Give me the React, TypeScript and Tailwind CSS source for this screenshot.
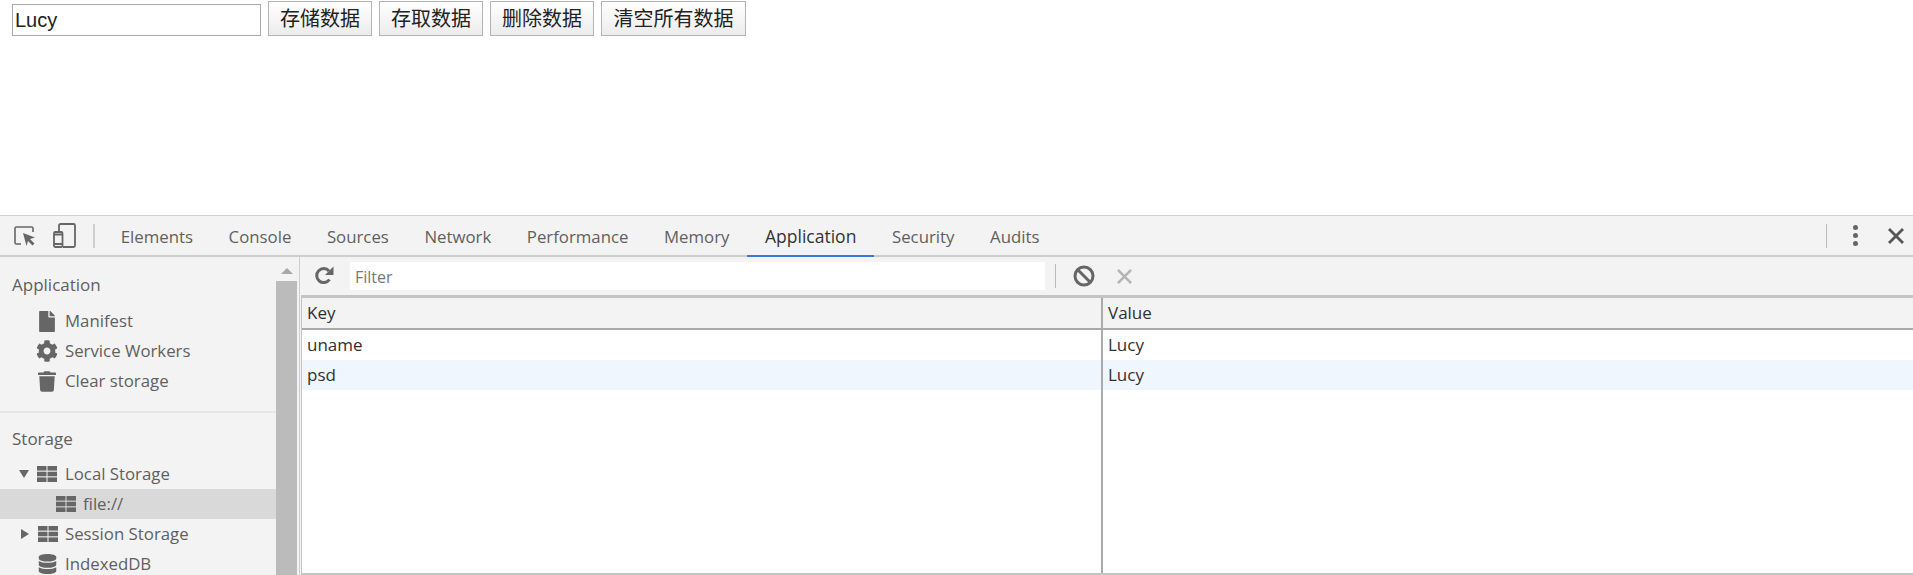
import { FaCog, FaDatabase, FaFile, FaTrash } from 'react-icons/fa'

const buttons = [
  { label: '存储数据', width: 'w-[104px]' },
  { label: '存取数据', width: 'w-[104px]' },
  { label: '删除数据', width: 'w-[104px]' },
  { label: '清空所有数据', width: 'w-[145px]' },
]

const tabs = ['Elements', 'Console', 'Sources', 'Network', 'Performance', 'Memory', 'Application', 'Security', 'Audits']

function TableIcon({ className }: { className: string }) {
  return (
    <svg viewBox="0 0 20 16" className={className} fill="#666">
      <rect x="0" y="0" width="9.500" height="4.600" />
      <rect x="10.500" y="0" width="9.500" height="4.600" />
      <rect x="0" y="5.700" width="9.500" height="4.600" />
      <rect x="10.500" y="5.700" width="9.500" height="4.600" />
      <rect x="0" y="11.400" width="9.500" height="4.600" />
      <rect x="10.500" y="11.400" width="9.500" height="4.600" />
    </svg>
  )
}

function InspectIcon() {
  return (
    <svg viewBox="0 0 22 22" className="h-[22px] w-[22px]" fill="none">
      <path d="M7 19H2.500A1.500 1.500 0 0 1 1 17.500V3.500A1.500 1.500 0 0 1 2.500 2h15A1.500 1.500 0 0 1 19 3.500V7" stroke="#666" strokeWidth="1.600" />
      <path d="M9 8l12 4.500-5 1.500 4.500 4.500-2 2-4.500-4.500-1.500 5z" fill="#666" />
    </svg>
  )
}

function DeviceIcon() {
  return (
    <svg viewBox="0 0 23 25" className="h-[25px] w-[23px]" fill="none" stroke="#666" strokeWidth="1.800">
      <path d="M6 8V2.500A1.500 1.500 0 0 1 7.500 1h13A1.500 1.500 0 0 1 22 2.500v20a1.500 1.500 0 0 1-1.500 1.500H10" />
      <rect x="1" y="9" width="8.500" height="15" rx="1.200" />
      <path d="M1 21h8.500M1 11.500h8.500" />
    </svg>
  )
}

function CrossIcon({ className }: { className: string }) {
  return (
    <svg viewBox="0 0 16 16" className={className} fill="none" stroke="currentColor" strokeWidth="2.800">
      <path d="M1 1l14 14M15 1L1 15" />
    </svg>
  )
}

function RefreshIcon() {
  return (
    <svg viewBox="0 0 20 20" className="ml-[14px] h-[20px] w-[20px]" fill="none">
      <path d="M15.500 13.500A7 7 0 1 1 15 5" stroke="#666" strokeWidth="3" />
      <path d="M19.500 0.500v8.500h-8.500z" fill="#666" />
    </svg>
  )
}

function BlockIcon() {
  return (
    <svg viewBox="0 0 22 22" className="ml-[17px] h-[22px] w-[22px]" fill="none" stroke="#666" strokeWidth="3">
      <circle cx="11" cy="11" r="9" />
      <path d="M4.500 4.500l13 13" />
    </svg>
  )
}

function SideRow({ icon, label, selected }: { icon: React.ReactNode; label: string; selected?: boolean }) {
  return (
    <div className={`flex h-[30px] items-center ${selected ? 'bg-[#d9d9d9]' : ''}`}>
      {icon}
      <span className="text-[16.800px] text-[#5f5f5f]">{label}</span>
    </div>
  )
}

export default function App() {
  return (
    <div className="h-[575px] w-[1913px] overflow-hidden bg-white font-['Open_Sans','Liberation_Sans',sans-serif]">
      <div className="flex h-[215px] items-start gap-[7px] pl-[12px] pt-[1px] font-['Liberation_Sans','Noto_Sans_CJK_SC',sans-serif] text-[20px] text-[#222]">
        <input
          readOnly
          value="Lucy"
          className="mt-[3px] h-[32px] w-[249px] border border-[#a9a9a9] bg-white px-[2px] outline-none"
        />
        {buttons.map((b) => (
          <button
            key={b.label}
            className={`${b.width} h-[35px] border border-[#b4b4b4] bg-linear-to-b from-white to-[#ececec] text-center`}
          >
            {b.label}
          </button>
        ))}
      </div>

      <div className="flex h-[360px] flex-col border-t border-[#cfcfcf] bg-[#f3f3f3]">
        <div className="flex h-[41px] shrink-0 items-center border-b-2 border-[#cdcdcd]">
          <div className="ml-[14px] flex items-center gap-[17px]">
            <InspectIcon />
            <DeviceIcon />
          </div>
          <div className="ml-[17px] h-[24px] w-[2px] bg-[#cfcfcf]" />
          <div className="ml-[8px] flex h-full items-center">
            {tabs.map((t) => (
              <div
                key={t}
                className={`-mb-[2px] flex h-[41px] items-center border-b-2 px-[17.800px] pt-[2px] ${
                  t === 'Application' ? 'border-[#3b78d8] text-[17.500px] text-[#333]' : 'border-transparent text-[16.800px] text-[#5f5f5f]'
                }`}
              >
                {t}
              </div>
            ))}
          </div>
          <div className="ml-auto h-[24px] w-[1px] bg-[#b9b9b9]" />
          <div className="ml-[26px] flex flex-col gap-[3px]">
            <span className="h-[5px] w-[5px] rounded-full bg-[#666]" />
            <span className="h-[5px] w-[5px] rounded-full bg-[#666]" />
            <span className="h-[5px] w-[5px] rounded-full bg-[#666]" />
          </div>
          <CrossIcon className="mr-[9px] ml-[30px] h-[16px] w-[16px] text-[#555]" />
        </div>

        <div className="flex min-h-0 flex-1">
          <div className="relative flex w-[299px] shrink-0">
            <div className="w-[276px] shrink-0">
              <div className="mt-[13px] mb-[6px] flex h-[30px] items-center pl-[12px] text-[17px] text-[#5f5f5f]">Application</div>
              <SideRow icon={<FaFile className="mr-[10px] ml-[39px] h-[21px] w-[16px] text-[#666]" />} label="Manifest" />
              <SideRow icon={<FaCog className="mr-[7px] ml-[36px] h-[22px] w-[22px] text-[#666]" />} label="Service Workers" />
              <SideRow icon={<FaTrash className="mr-[9px] ml-[38px] h-[21px] w-[18px] text-[#666]" />} label="Clear storage" />
              <div className="mt-[15px] h-[2px] bg-[#e6e6e6]" />
              <div className="mt-[11px] flex h-[30px] items-center pl-[12px] text-[17px] text-[#5f5f5f]">Storage</div>
              <div className="mt-[5px]">
                <SideRow
                  icon={
                    <>
                      <span className="ml-[19px] h-0 w-0 border-x-[5.500px] border-t-[8px] border-x-transparent border-t-[#666]" />
                      <TableIcon className="mr-[8px] ml-[8px] h-[16px] w-[20px]" />
                    </>
                  }
                  label="Local Storage"
                />
                <SideRow icon={<TableIcon className="mr-[7px] ml-[56px] h-[16px] w-[20px]" />} label="file://" selected />
                <SideRow
                  icon={
                    <>
                      <span className="ml-[21px] h-0 w-0 border-y-[5.500px] border-l-[8px] border-y-transparent border-l-[#666]" />
                      <TableIcon className="mr-[7px] ml-[9px] h-[16px] w-[20px]" />
                    </>
                  }
                  label="Session Storage"
                />
                <SideRow icon={<FaDatabase className="mr-[8px] ml-[38px] h-[20px] w-[19px] text-[#666]" />} label="IndexedDB" />
              </div>
            </div>
            <div className="flex w-[21px] shrink-0 flex-col items-center">
              <span className="mt-[11px] h-0 w-0 border-x-[6px] border-b-[6px] border-x-transparent border-b-[#a8a8a8]" />
              <div className="mt-[7px] w-full flex-1 bg-[#bbbbbb]" />
            </div>
          </div>

          <div className="flex min-w-0 flex-1 flex-col border-l border-[#cdcdcd]">
            <div className="flex h-[38px] shrink-0 items-center">
              <RefreshIcon />
              <div className="ml-[16px] flex h-[28px] w-[695px] items-center bg-white pt-[2px] pl-[5px] text-[16px] text-[#777]">Filter</div>
              <div className="ml-[10px] h-[24px] w-[1px] bg-[#b9b9b9]" />
              <BlockIcon />
              <CrossIcon className="ml-[22px] h-[15px] w-[15px] text-[#b5b5b5]" />
            </div>
            <div className="ml-[1px] flex min-h-0 flex-1 flex-col border-t-[3px] border-b-2 border-l border-[#c4c4c4] bg-white text-[17px] text-[#303030]">
              <div className="flex h-[32px] shrink-0 border-b-2 border-[#aaaaaa] bg-[#f3f3f3]">
                <div className="flex w-[799px] items-center pl-[5px]">Key</div>
                <div className="flex flex-1 items-center border-l-2 border-[#aaaaaa] pl-[5px]">Value</div>
              </div>
              <div className="flex h-[30px] shrink-0">
                <div className="flex w-[799px] items-center pl-[5px]">uname</div>
                <div className="flex flex-1 items-center border-l-2 border-[#aaaaaa] pl-[5px]">Lucy</div>
              </div>
              <div className="flex h-[30px] shrink-0 bg-[#f0f6fd]">
                <div className="flex w-[799px] items-center pl-[5px]">psd</div>
                <div className="flex flex-1 items-center border-l-2 border-[#aaaaaa] pl-[5px]">Lucy</div>
              </div>
              <div className="flex min-h-0 flex-1">
                <div className="w-[799px]" />
                <div className="flex-1 border-l-2 border-[#aaaaaa]" />
              </div>
            </div>
          </div>
        </div>
      </div>
    </div>
  )
}
